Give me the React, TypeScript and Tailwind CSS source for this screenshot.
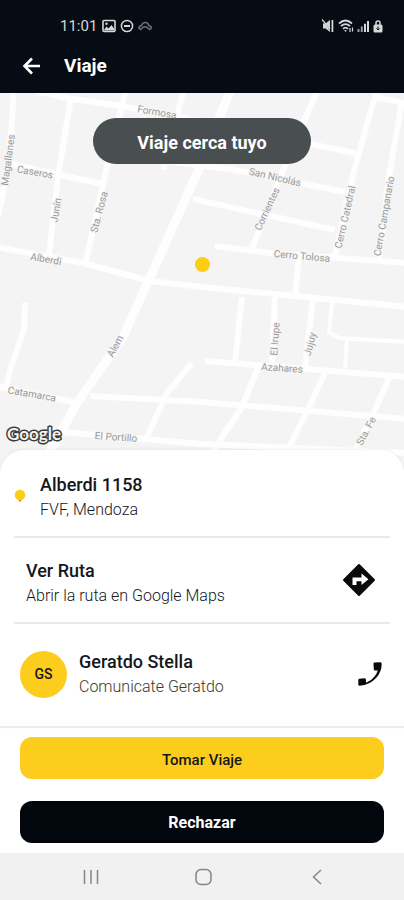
import React from 'react';

const roads = [
  'M14 -4 L9 70 L-2 124',
  'M71 4 L58 84 L49 162',
  'M126 -4 L107 74 L86 168',
  'M36 -2 L67 5 L127 14 L177 24 L315 52 L355 60',
  'M10 71 L60 82 L103 91',
  'M-4 154 L83 170 L150 188 L202 194 L408 214',
  'M184 -4 L163 77',
  'M166 68 L230 76 L345 99',
  'M193 106 L335 137',
  'M215 153 L269 160 L408 170',
  'M318 -4 L280 84 L252 156',
  'M376 0 L355 74 L335 163',
  'M376 4 L408 11',
  'M402 8 L389 84 L379 166',
  'M299 164 L295 202',
  'M242 204 L235 269',
  'M275 204 L272 270',
  'M313 206 L305 274',
  'M205 268 L408 284',
  'M259 272 L242 314 L213 358',
  'M325 280 L309 314 L287 358',
  'M389 285 L375 317 L353 362',
  'M90 303 L202 309 L408 326',
  'M50 338 L202 351 L408 360',
  'M25 210 L24 237 L10 277 L6 296',
  'M-4 293 L73 309',
  'M192 270 L167 300 L145 348',
];

const thinRoads = ['M332 210 L329 239 L339 245 L408 249', 'M347 247 L345 275'];

const streets = [
  { name: 'Formosa', x: 157, y: 19, angle: 10 },
  { name: 'Magallanes', x: 8, y: 67, angle: -82 },
  { name: 'Caseros', x: 35, y: 79, angle: 10 },
  { name: 'Junín', x: 56, y: 117, angle: -80 },
  { name: 'Sta. Rosa', x: 99, y: 119, angle: -75 },
  { name: 'Alberdi', x: 46, y: 166, angle: 10 },
  { name: 'San Nicolás', x: 275, y: 84, angle: 13 },
  { name: 'Corrientes', x: 267, y: 116, angle: -65 },
  { name: 'Cerro Catedral', x: 345, y: 124, angle: -77 },
  { name: 'Cerro Campanario', x: 384, y: 123, angle: -80 },
  { name: 'Cerro Tolosa', x: 302, y: 163, angle: 5 },
  { name: 'El Irupe', x: 275, y: 246, angle: -86 },
  { name: 'Jujuy', x: 310, y: 251, angle: -76 },
  { name: 'Azahares', x: 282, y: 275, angle: 4 },
  { name: 'Alem', x: 115, y: 253, angle: -62 },
  { name: 'Catamarca', x: 32, y: 301, angle: 10 },
  { name: 'El Portillo', x: 116, y: 344, angle: 4 },
  { name: 'Sta. Fe', x: 366, y: 338, angle: -62 },
];

function StatusBar() {
  return (
    <div className="flex h-12 items-center justify-between pt-1 pr-5 pl-15">
      <div className="flex items-center gap-0.5 text-[#d5d7d9]">
        <span className="mr-0.5 text-[15px]">11:01</span>
        <svg viewBox="0 0 16 16" className="size-4" fill="none" stroke="currentColor" strokeWidth="1.6">
          <rect x="2" y="2.500" width="12" height="11" rx="1" />
          <path d="M3 12 L5.500 8.500 L7.500 10.500 L10.500 7 L13 10.500 V12.500 H3z" fill="currentColor" stroke="none" />
          <circle cx="5.500" cy="5.800" r="1.200" fill="currentColor" stroke="none" />
        </svg>
        <svg viewBox="0 0 16 16" className="size-4" fill="none" stroke="currentColor" strokeWidth="1.500">
          <circle cx="8" cy="8" r="5.600" />
          <path d="M5 8h6" strokeWidth="2" />
        </svg>
        <svg viewBox="0 0 16 16" className="size-4 text-[#6d7073]" fill="none" stroke="currentColor" strokeWidth="1.500">
          <path d="M3.5 11.5 L1.8 10.2 Q2 8 4.5 7.6 Q5.4 4.6 8.3 4.6 Q11.2 4.6 11.8 7.6 Q14.3 8 14.4 10.2 L12.5 11.5 L10.5 9.6 Q8 8 5.6 9.6 Z" />
        </svg>
      </div>
      <div className="flex items-center gap-0.5 text-[#d5d7d9]">
        <svg viewBox="0 0 14 14" className="size-3.5" fill="currentColor">
          <path d="M3 4.500h2.600L10 1v12L5.600 9.500H3z" />
          <path d="M3 1 L11 12" stroke="#060c13" strokeWidth="1" />
          <path d="M2 .5 L10 10" stroke="currentColor" strokeWidth="1.200" />
          <path d="M11.500 1h1.800v12h-1.800z" />
        </svg>
        <svg viewBox="0 0 18 16" className="h-4 w-[18px]" fill="none" stroke="currentColor" strokeWidth="1.800">
          <path d="M3 5.500 Q9.500 -.5 16 5.500" />
          <path d="M5 8.200 Q9.500 4 14 8.200" />
          <path d="M7 10.800 Q9.500 8.300 12 10.800" />
          <path d="M9.500 14 L8 12.300h3z" fill="currentColor" stroke="none" />
          <path d="M14 10v4M16.500 9.500v4" strokeWidth="1.200" />
        </svg>
        <svg viewBox="0 0 14 14" className="size-3.5" fill="currentColor">
          <path d="M1.500 10h2v3h-2zM4.800 7.500h2V13h-2z" fill="#9a9d9f" />
          <path d="M8 4.800h2V13H8zM11 2h2v11h-2z" />
        </svg>
        <svg viewBox="0 0 12 14" className="h-3.5 w-3" fill="currentColor">
          <path d="M4 6V4a2 2 0 0 1 4 0v2" fill="none" stroke="currentColor" strokeWidth="1.500" />
          <rect x="1.500" y="5.500" width="9" height="8" rx="1.500" />
          <path d="M6 7.500v3M4.500 9.500L6 11l1.500-1.500" fill="none" stroke="#060c13" strokeWidth="1" />
        </svg>
      </div>
    </div>
  );
}

function StreetMap() {
  return (
    <svg viewBox="0 0 404 377" preserveAspectRatio="xMidYMid slice" className="absolute inset-0 size-full">
      <rect width="404" height="377" fill="#f4f4f4" />
      <g fill="none" stroke="#fefefe" strokeWidth="6" strokeLinejoin="round">
        {roads.map((d) => (
          <path key={d} d={d} />
        ))}
        <path d="M230 -2 L200 74 L152 180 L123 244 L77 310 L48 362" strokeWidth="9" />
        {thinRoads.map((d) => (
          <path key={d} d={d} strokeWidth="4" />
        ))}
      </g>
      <g fill="#9a9a9a" stroke="#f6f6f6" strokeWidth="2" paintOrder="stroke" fontSize="10" textAnchor="middle" dominantBaseline="central">
        {streets.map((s) => (
          <text key={s.name} transform={`translate(${s.x} ${s.y}) rotate(${s.angle})`}>
            {s.name}
          </text>
        ))}
      </g>
      <circle cx="202.500" cy="171.500" r="7.500" fill="#fccd14" />
      <text x="7" y="347" fontSize="17" fontWeight="700" fontFamily="Lato, sans-serif" fill="#f4f4f4" stroke="#3c3c3c" strokeWidth="3" strokeLinejoin="round" paintOrder="stroke">
        Google
      </text>
    </svg>
  );
}

function Row({ children, last }: { children: React.ReactNode; last?: boolean }) {
  return (
    <div className={last ? 'flex h-[102px] items-center px-2 pb-0.5' : 'flex h-[86px] items-center border-b-2 border-[#e9e9e9] px-2'}>
      {children}
    </div>
  );
}

export default function App() {
  return (
    <div className="flex min-h-screen flex-col bg-white font-[Roboto,sans-serif] text-[#15171a]">
      <header className="bg-[#060c13] text-white">
        <StatusBar />
        <div className="flex h-[45px] items-start gap-5 pt-1 pl-5">
          <button type="button" aria-label="Volver" className="flex h-7 items-center">
            <svg viewBox="0 0 24 24" className="size-6" fill="none" stroke="currentColor" strokeWidth="2.600">
              <path d="M20 12H5M12 4.500L4.500 12l7.500 7.500" />
            </svg>
          </button>
          <h1 className="text-[19px] leading-7 font-bold">Viaje</h1>
        </div>
      </header>

      <main className="flex flex-1 flex-col">
        <section className="relative flex min-h-94 flex-1 justify-center pt-[25px]">
          <StreetMap />
          <div className="relative flex h-[46px] w-[218px] items-center justify-center rounded-full bg-[#494e51] pt-1 text-lg font-bold text-white">
            Viaje cerca tuyo
          </div>
        </section>

        <section className="relative -mt-5 rounded-t-3xl border-b-2 border-[#ececec] bg-white px-3.5 pt-0.5 shadow-[0_-1px_3px_rgba(0,0,0,0.06)]">
          <Row>
            <svg viewBox="0 0 12 14" className="mt-1 mr-3.5 -ml-2 h-3.5 w-3">
              <circle cx="6" cy="6" r="5.300" fill="#fccd14" />
              <path d="M4.500 11h3L6 13z" fill="#b08c10" />
            </svg>
            <div className="pt-1.5">
              <h2 className="text-lg leading-[25px] font-medium">Alberdi 1158</h2>
              <p className="text-base leading-[25px] font-light">FVF, Mendoza</p>
            </div>
          </Row>
          <Row>
            <div className="flex-1 pt-1.5 pl-1">
              <h2 className="text-lg leading-[25px] font-medium">Ver Ruta</h2>
              <p className="text-base leading-[25px] font-light">Abrir la ruta en Google Maps</p>
            </div>
            <button type="button" aria-label="Ver Ruta" className="mr-1.5">
              <svg viewBox="0 0 34 34" className="size-[34px]">
                <path d="M17 2 L32 17 L17 32 L2 17z" fill="#08090b" stroke="#08090b" strokeWidth="2" strokeLinejoin="round" />
                <path d="M10.500 22V14.500h9V10.500L26.500 16.300L19.500 22V18.300H14.500V22z" fill="#fff" />
              </svg>
            </button>
          </Row>
          <Row last>
            <div className="mr-3 -ml-0.5 flex size-[47px] items-center justify-center rounded-full bg-[#fccd1c] text-sm font-medium">GS</div>
            <div className="flex-1">
              <h2 className="text-lg leading-[25px] font-medium">Geratdo Stella</h2>
              <p className="text-base leading-[25px] font-light text-[#3d3a22]">Comunicate Geratdo</p>
            </div>
            <button type="button" aria-label="Llamar">
              <svg viewBox="0 0 24 24" className="size-6" fill="#08090b">
                <path d="M16.500 .5L22.500 .3Q23.700 .4 23.700 1.800Q23.600 10 18.500 15.500Q12 23 1.500 23.700Q.3 23.700 .3 22.500V18Q.3 16.800 1.500 16.700L6.500 16.300Q8 16.300 8 17.800V20.800Q13 19 16.300 14.700Q19 11.500 19.800 8.500H17Q15.800 8.500 15.800 7.200L15.500 1.800Q15.500 .6 16.500 .5z" />
              </svg>
            </button>
          </Row>
        </section>

        <section className="flex flex-col gap-[22px] bg-white px-5 pt-[9px] pb-2.5">
          <button type="button" className="h-[42px] rounded-xl bg-[#fccd1c] pt-1 text-[15px] font-medium">
            Tomar Viaje
          </button>
          <button type="button" className="h-[42px] rounded-xl bg-[#02070d] pt-0.5 text-base font-bold text-white">
            Rechazar
          </button>
        </section>
      </main>

      <nav className="flex h-[47px] items-center justify-between bg-[#f1f1f1] px-20 text-[#858585]">
        <button type="button" aria-label="Recientes">
          <svg viewBox="0 0 20 20" className="size-5" stroke="currentColor" strokeWidth="1.500">
            <path d="M4.500 3v14M11 3v14M17.500 3v14" />
          </svg>
        </button>
        <button type="button" aria-label="Inicio">
          <svg viewBox="0 0 20 20" className="size-5" fill="none" stroke="currentColor" strokeWidth="1.500">
            <rect x="4" y="2.500" width="15" height="15" rx="5" />
          </svg>
        </button>
        <button type="button" aria-label="Atrás">
          <svg viewBox="0 0 20 20" className="size-5" fill="none" stroke="currentColor" strokeWidth="1.500">
            <path d="M17 3L9.500 10l7.500 7" />
          </svg>
        </button>
      </nav>
    </div>
  );
}
